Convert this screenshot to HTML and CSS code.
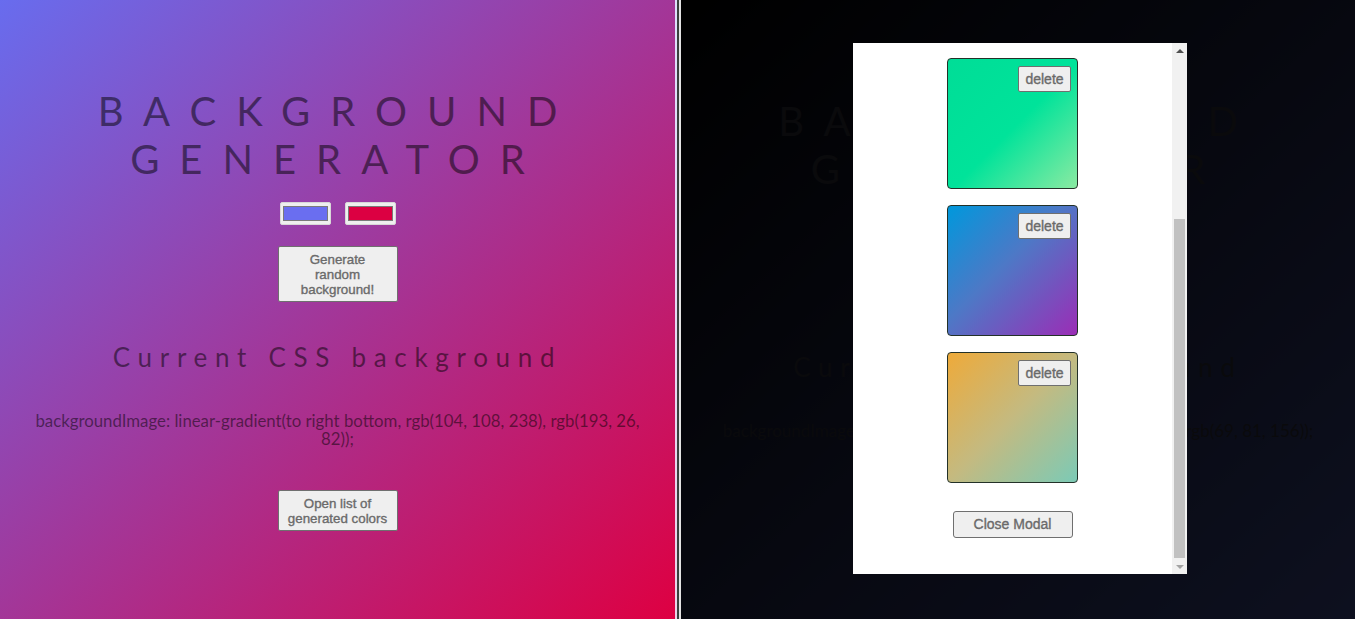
FILE: index.html
```html
<!DOCTYPE html>
<html lang="en">
<head>
<meta charset="utf-8">
<title>Background Generator</title>
<link rel="stylesheet" href="styles.css">
</head>
<body>
<div class="split">
  <main class="pane pane-left">
    <h1 class="title"><span class="title-line">BACKGROUND</span> <span class="title-line">GENERATOR</span></h1>
    <div class="pickers">
      <input class="picker" type="color" value="#6a6ef0">
      <input class="picker" type="color" value="#dc0042">
    </div>
    <button class="btn btn-generate" type="button">Generate random background!</button>
    <h2 class="subtitle">Current CSS background</h2>
    <p class="css-text">backgroundImage: linear-gradient(to right bottom, rgb(104, 108, 238), rgb(193, 26, 82));</p>
    <button class="btn btn-list" type="button">Open list of generated colors</button>
  </main>
  <div class="divider"></div>
  <section class="pane pane-right">
    <h1 class="title"><span class="title-line">BACKGROUND</span> <span class="title-line">GENERATOR</span></h1>
    <div class="pickers is-covered">
      <input class="picker" type="color" value="#010206">
      <input class="picker" type="color" value="#45519c">
    </div>
    <button class="btn btn-generate is-covered" type="button">Generate random background!</button>
    <h2 class="subtitle">Current CSS background</h2>
    <p class="css-text css-text-wide">backgroundImage: linear-gradient(to right bottom, rgb(1, 2, 6), rgb(69, 81, 156));</p>
    <button class="btn btn-list is-covered" type="button">Open list of generated colors</button>

    <div class="overlay"></div>
    <div class="modal">
      <div class="modal-body">
        <div class="card card-green"><button class="btn btn-delete" type="button">delete</button></div>
        <div class="card card-blue"><button class="btn btn-delete" type="button">delete</button></div>
        <div class="card card-sand"><button class="btn btn-delete" type="button">delete</button></div>
        <button class="btn btn-close" type="button">Close Modal</button>
      </div>
      <div class="scrollbar">
        <div class="sb-btn"><span class="arrow arrow-up"></span></div>
        <div class="sb-track"><div class="sb-thumb"></div></div>
        <div class="sb-btn"><span class="arrow arrow-down"></span></div>
      </div>
    </div>
  </section>
</div>
</body>
</html>
```
FILE: styles.css
```css
* { box-sizing: border-box; }

html, body {
  margin: 0;
  height: 100%;
}

body {
  font-family: "Lato", "Liberation Sans", sans-serif;
  background: #000;
  overflow: hidden;
}

.split {
  display: flex;
  height: 619px;
}

.pane {
  display: flex;
  flex-direction: column;
  align-items: center;
  text-align: center;
  color: rgba(0, 0, 0, 0.5);
}

.pane-left {
  flex: none;
  width: 677px;
  background: linear-gradient(to right bottom, rgb(104, 108, 238), rgb(222, 0, 66));
  border-right: 2px solid rgba(255, 255, 255, 0.78);
}

.divider {
  flex: none;
  width: 4px;
  border-left: 2px solid #39403d;
  border-right: 2px solid #e4e4e4;
}

.pane-right {
  position: relative;
  flex: 1;
  padding-top: 10px;
  background: linear-gradient(to right bottom, rgb(0, 0, 0), rgb(69, 81, 156));
  color: #32323c;
}

.is-covered { visibility: hidden; }

.title {
  margin: 87px 0 0;
  font-size: 40px;
  font-weight: 400;
  line-height: 48px;
  letter-spacing: 20px;
}

.title-line { display: block; }

.pickers {
  display: flex;
  gap: 14px;
  margin-top: 19px;
}

.picker {
  -webkit-appearance: none;
  appearance: none;
  width: 51px;
  height: 23px;
  padding: 0;
  margin: 0;
  border: 1px solid #d8d8d8;
  border-radius: 2px;
  background: #efefef;
}

.picker::-webkit-color-swatch-wrapper { padding: 3px 2px; }
.picker::-webkit-color-swatch { border: 1px solid #7a7a7a; border-radius: 0; }

.btn {
  font-family: "Liberation Sans", Arial, sans-serif;
  font-size: 13.33px;
  font-weight: 400;
  line-height: 15px;
  color: #6a6a6a;
  -webkit-text-stroke: 0.35px #6a6a6a;
  background: #efefef;
  border: 1px solid #6f6f6f;
  border-radius: 2px;
  padding: 0 4px;
  margin: 0;
}

.btn-generate {
  width: 120px;
  height: 56px;
  margin-top: 21px;
  padding: 0 8px;
}

.subtitle {
  margin: 39px 0 0;
  font-size: 26px;
  font-weight: 400;
  line-height: 32px;
  letter-spacing: 7.7px;
}

.css-text {
  width: 630px;
  margin: 39px 0 0;
  font-size: 16.8px;
  line-height: 18px;
}

.css-text-wide { width: 650px; font-size: 17px; }

.btn-list {
  width: 120px;
  height: 41px;
  margin-top: 42px;
}

.overlay {
  position: absolute;
  inset: 0;
  background: rgba(0, 0, 0, 0.8);
}

.modal {
  position: absolute;
  left: 172px;
  top: 43px;
  width: 334px;
  height: 531px;
  display: flex;
  background: #fff;
}

.modal-body {
  flex: 1;
  display: flex;
  flex-direction: column;
  align-items: center;
  gap: 16px;
  padding-top: 15px;
}

.card {
  position: relative;
  flex: none;
  width: 131px;
  height: 131px;
  border: 1px solid #233128;
  border-radius: 4px;
}

.card-green {
  background: linear-gradient(to right bottom, #00dd97 0%, #00e39a 52%, #8aeaa2 100%);
}

.card-blue {
  background: linear-gradient(to right bottom, #0098dc 0%, #4e78c6 45%, #9b2db6 100%);
}

.card-sand {
  background: linear-gradient(to right bottom, #eeaa3a 0%, #c4ba80 50%, #7ccab6 100%);
}

.btn-delete {
  position: absolute;
  top: 7px;
  right: 6px;
  width: 53px;
  height: 26px;
  padding: 0;
  font-size: 14px;
}

.btn-close {
  width: 120px;
  height: 27px;
  margin-top: 12px;
  border-radius: 3px;
  font-size: 14px;
}

.scrollbar {
  flex: none;
  width: 15px;
  display: flex;
  flex-direction: column;
  background: #f1f1f1;
}

.sb-btn {
  flex: none;
  height: 15px;
  display: flex;
  align-items: center;
  justify-content: center;
}

.sb-track {
  flex: 1;
  display: flex;
  flex-direction: column;
  justify-content: flex-end;
  padding: 0 2px 1px;
}

.sb-thumb {
  height: 339px;
  background: #c1c1c1;
}

.arrow {
  width: 0;
  height: 0;
  border-left: 4px solid transparent;
  border-right: 4px solid transparent;
}

.arrow-up { border-bottom: 4px solid #505050; }
.arrow-down { border-top: 4px solid #a3a3a3; }
```
